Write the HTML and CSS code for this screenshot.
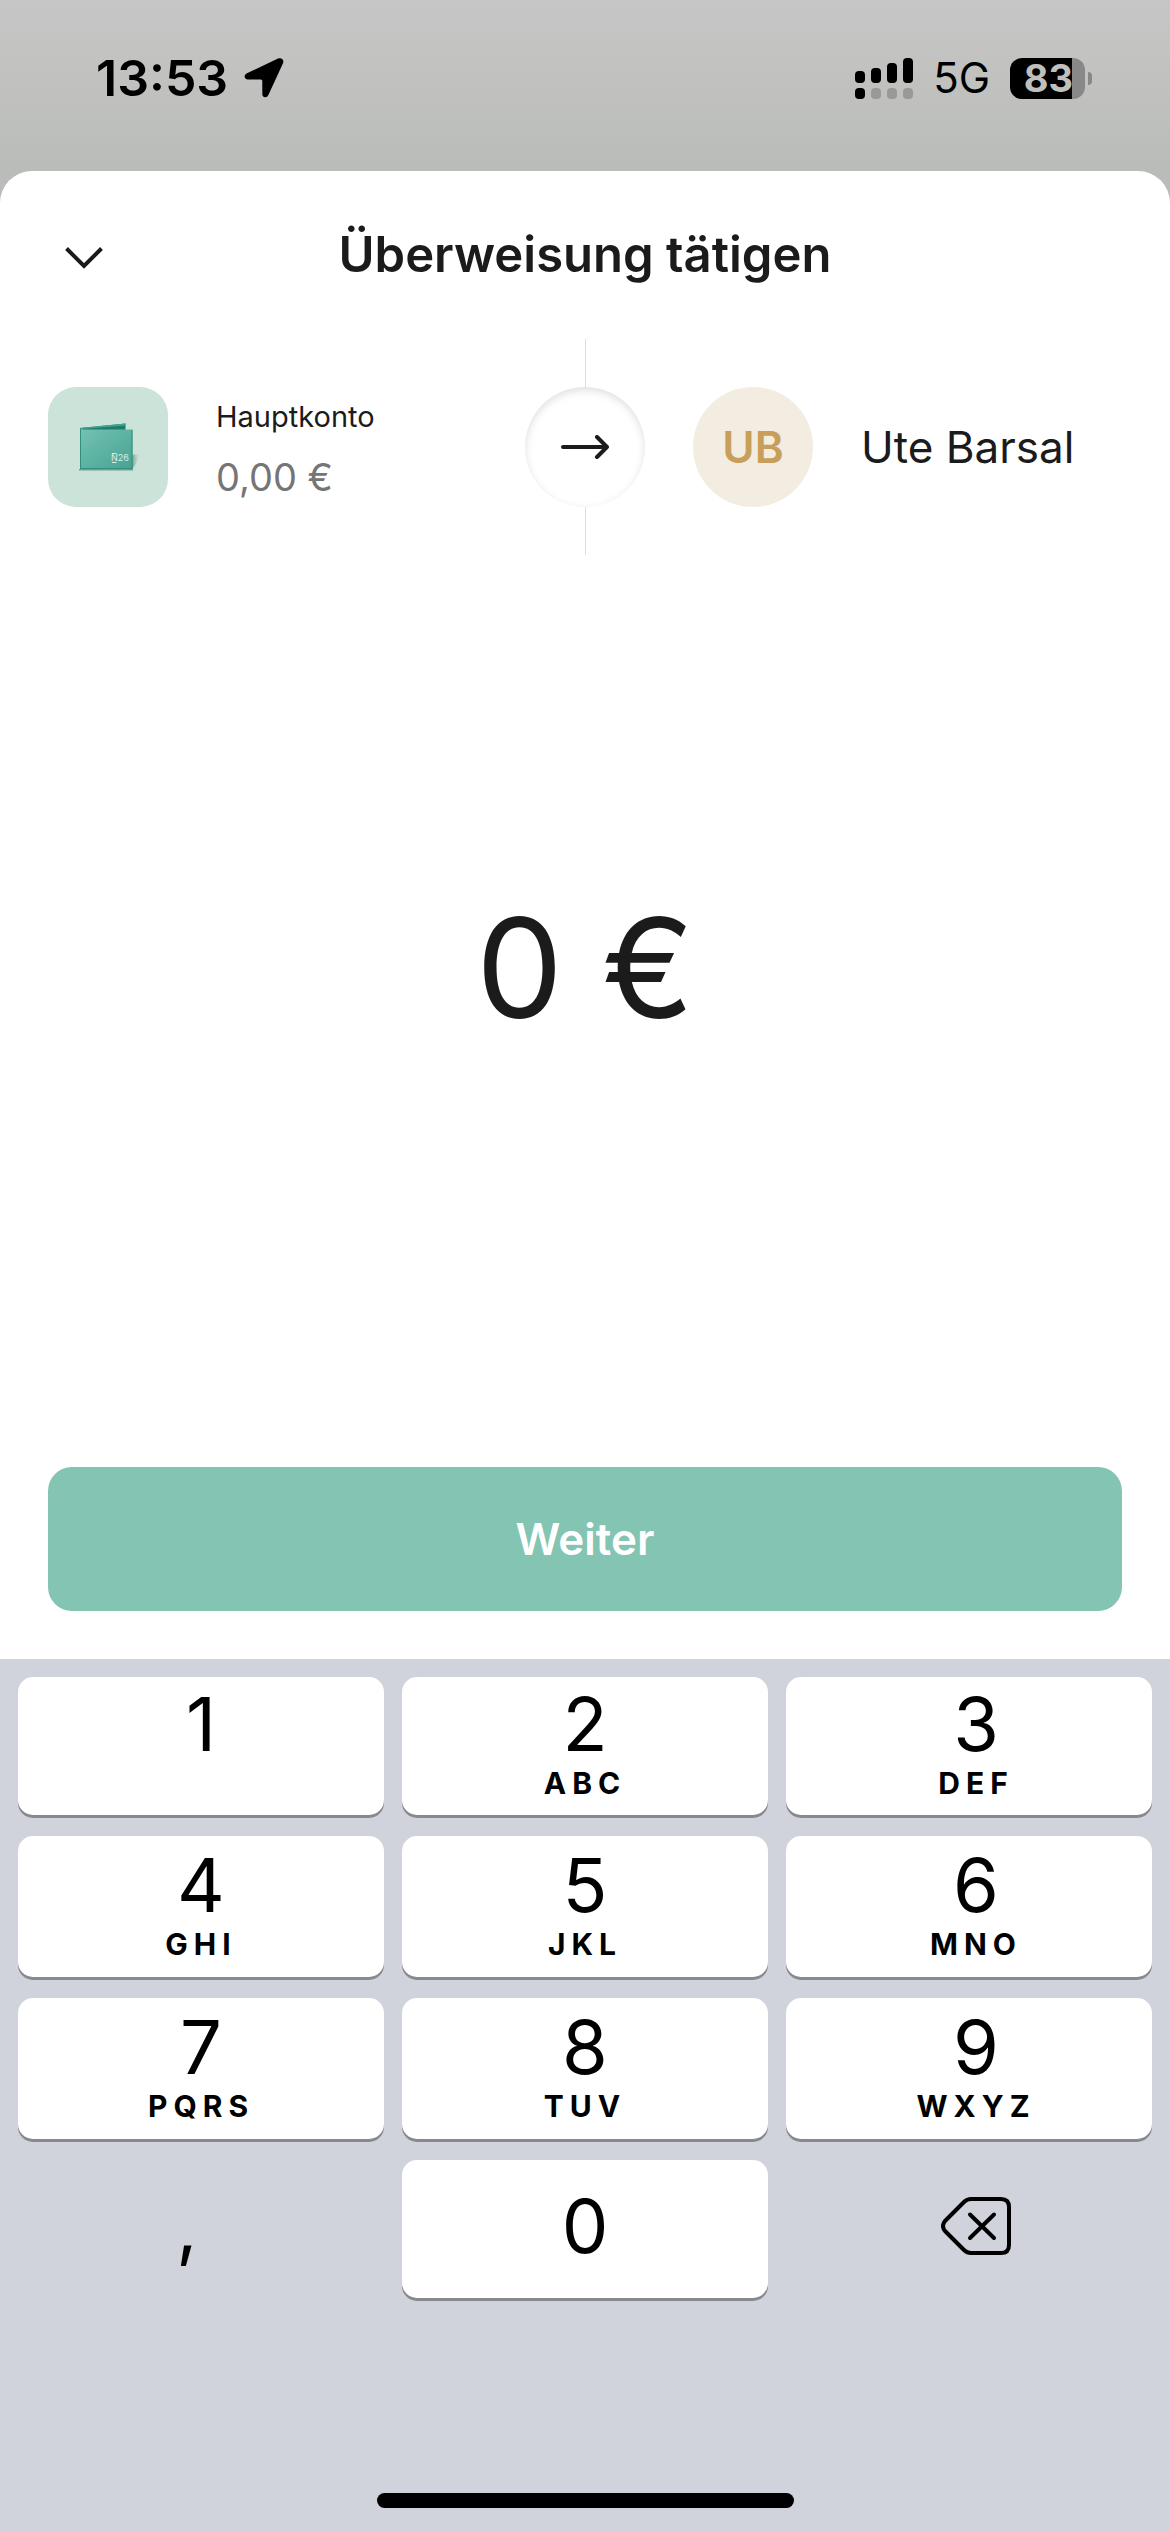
FILE: index.html
```html
<!DOCTYPE html>
<html lang="de">
<head>
<meta charset="utf-8">
<meta name="viewport" content="width=device-width, initial-scale=1">
<title>Überweisung tätigen</title>
<link rel="stylesheet" href="styles.css">
</head>
<body>
<div class="status-bar">
  <div class="status-group">
    <span class="clock">13:53</span>
    <svg class="location" viewBox="0 0 40 40" aria-hidden="true"><path d="M34 .6 3 15.300C-.8 17 .3 21.500 4 21.500H17Q18.300 21.500 18.300 23V36C18.300 40 23 40.500 24.500 36.800L39 5.200C40.400 1.800 37.500-.8 34 .6Z"/></svg>
  </div>
  <div class="status-group status-right">
    <svg class="signal" viewBox="0 0 58 41" aria-hidden="true">
      <rect y="13" width="10" height="12" rx="4"/><rect x="16" y="10" width="10" height="15" rx="4"/><rect x="32" y="5" width="10" height="20" rx="4"/><rect x="48" width="10" height="25" rx="4"/>
      <rect y="30" width="10" height="11" rx="4"/>
      <g fill="#999a98"><rect x="16" y="30" width="10" height="11" rx="4"/><rect x="32" y="30" width="10" height="11" rx="4"/><rect x="48" y="30" width="10" height="11" rx="4"/></g>
    </svg>
    <span class="network">5G</span>
    <div class="battery"><span class="battery-body">83</span><span class="battery-cap"></span></div>
  </div>
</div>

<main class="sheet">
  <header class="sheet-header">
    <button class="close" type="button" aria-label="Schließen">
      <svg viewBox="0 0 40 24" aria-hidden="true"><path d="M2.500 2.500 20 20 37.500 2.500" fill="none" stroke="currentColor" stroke-width="4"/></svg>
    </button>
    <h1 class="title">Überweisung tätigen</h1>
  </header>

  <section class="transfer">
    <div class="party">
      <div class="account-icon">
        <svg viewBox="0 0 120 120" aria-hidden="true">
          <defs>
            <linearGradient id="leather" x1="0" y1="0" x2="1" y2="1"><stop offset="0" stop-color="#74c2b2"/><stop offset="1" stop-color="#47a392"/></linearGradient>
            <linearGradient id="shade" x1="0" y1="0" x2="1" y2="0"><stop offset="0" stop-color="#6f8f84" stop-opacity=".9"/><stop offset="1" stop-color="#9fbab0" stop-opacity="0"/></linearGradient>
          </defs>
          <path d="M84 68 91 67Q90 76 84 82Z" fill="url(#shade)"/>
          <path d="M31 82H85V83.500H31Z" fill="#7b9b90"/>
          <path d="M32 41 77.500 36.500V44H32Z" fill="#1d7c6b"/>
          <path d="M32 41 77.500 36.500V38.500L34 42Z" fill="#43a392"/>
          <path d="M32 41.500 35 42.500H84.500V82H32Z" fill="url(#leather)"/>
          <path d="M32.500 42V82M32 81.500H84.500M84 43V82" stroke="#328d7c" fill="none"/>
          <path d="M64 66.500H68.500M64 75.500H68.500" stroke="#d6eee5" stroke-width="1"/>
          <text class="wallet-label" x="63" y="74">N26</text>
        </svg>
      </div>
      <div class="account">
        <div class="account-name">Hauptkonto</div>
        <div class="account-balance">0,00 €</div>
      </div>
    </div>
    <div class="connector">
      <div class="connector-circle">
        <svg viewBox="0 0 48 24" aria-hidden="true"><path d="M2 12H46M36 2 46 12 36 22" fill="none" stroke="currentColor" stroke-width="4" stroke-linecap="round" stroke-linejoin="round"/></svg>
      </div>
    </div>
    <div class="party">
      <div class="avatar">UB</div>
      <div class="recipient">Ute Barsal</div>
    </div>
  </section>

  <section class="amount">
    <input class="amount-input" type="text" inputmode="decimal" aria-label="Betrag" value="0 €">
  </section>

  <div class="actions"><button class="submit" type="button">Weiter</button></div>
</main>

<div class="keyboard">
  <div class="keys">
    <button class="key" type="button"><span class="digit">1</span><span class="letters"></span></button>
    <button class="key" type="button"><span class="digit">2</span><span class="letters">ABC</span></button>
    <button class="key" type="button"><span class="digit">3</span><span class="letters">DEF</span></button>
    <button class="key" type="button"><span class="digit">4</span><span class="letters">GHI</span></button>
    <button class="key" type="button"><span class="digit">5</span><span class="letters">JKL</span></button>
    <button class="key" type="button"><span class="digit">6</span><span class="letters">MNO</span></button>
    <button class="key" type="button"><span class="digit">7</span><span class="letters">PQRS</span></button>
    <button class="key" type="button"><span class="digit">8</span><span class="letters">TUV</span></button>
    <button class="key" type="button"><span class="digit">9</span><span class="letters">WXYZ</span></button>
    <button class="key key-single key-plain key-comma" type="button"><span class="digit">,</span></button>
    <button class="key key-single" type="button"><span class="digit">0</span></button>
    <button class="key key-single key-plain" type="button" aria-label="Löschen">
      <svg class="delete" viewBox="0 0 70 58" aria-hidden="true"><g fill="none" stroke="currentColor" stroke-width="4" stroke-linecap="round" stroke-linejoin="round"><path d="M30 2H60Q68 2 68 10V48Q68 56 60 56H30Q26 56 23 53L4 34Q0 29 4 24L23 5Q26 2 30 2Z"/><path d="M29 17.500 53 41M53 17.500 29 41"/></g></svg>
    </button>
  </div>
  <div class="home-indicator"></div>
</div>
</body>
</html>
```

FILE: styles.css
```css
* { box-sizing: border-box; }

body {
  margin: 0;
  min-height: 100vh;
  display: flex;
  flex-direction: column;
  font-family: Inter, "Liberation Sans", sans-serif;
  color: #1b1b1b;
  background: linear-gradient(#c6c6c7 0, #c3c4c1 50px, #babcb9 171px, #babcb9 240px);
}

button {
  padding: 0;
  border: 0;
  background: none;
  color: inherit;
  font: inherit;
}

svg { display: block; }

/* Status bar */
.status-bar {
  height: 171px;
  padding: 48px 78px 0 96px;
  display: flex;
  justify-content: space-between;
  align-items: flex-start;
  color: #000;
}
.status-group { display: flex; align-items: center; gap: 16px; height: 60px; }
.status-right { gap: 20px; }
.clock { font-size: 50px; line-height: 60px; font-weight: 600; }
.location { width: 40px; height: 40px; }
.signal { width: 58px; height: 41px; }
.network { font-size: 42px; line-height: 60px; font-weight: 400; }
.battery { display: flex; align-items: center; gap: 3px; }
.battery-body {
  width: 75px;
  height: 41px;
  padding-left: 2px;
  border-radius: 12px;
  background: linear-gradient(90deg, #000 62px, #888 62px);
  color: #bfc0be;
  font-size: 38px;
  line-height: 41px;
  font-weight: 700;
  text-align: center;
}
.battery-cap { width: 4px; height: 13px; border-radius: 0 4px 4px 0; background: #888; }

/* Sheet */
.sheet {
  flex: 1;
  display: flex;
  flex-direction: column;
  border-radius: 32px 32px 0 0;
  background: #fff;
}
.sheet-header {
  height: 168px;
  padding: 0 48px;
  display: grid;
  grid-template-columns: 72px 1fr 72px;
  align-items: center;
}
.close { height: 72px; display: grid; place-items: center start; padding: 6px 0 0 16px; }
.close svg { width: 40px; height: 24px; }
.title { margin: 0; text-align: center; font-size: 49px; line-height: 60px; font-weight: 600; }

.transfer {
  height: 216px;
  padding: 0 48px;
  display: grid;
  grid-template-columns: 1fr 120px 1fr;
  column-gap: 48px;
}
.party { display: flex; align-items: center; gap: 48px; white-space: nowrap; }
.account-icon, .avatar { flex: none; width: 120px; height: 120px; }
.account-icon { border-radius: 28px; background: #cbe3d9; }
.wallet-label { font: 9px Inter, sans-serif; fill: #d6eee5; }
.account-name { font-size: 29px; line-height: 60px; }
.account-balance { font-size: 38px; line-height: 60px; color: #757575; }
.connector { display: flex; flex-direction: column; align-items: center; }
.connector::before, .connector::after { content: ""; flex: 1; width: 1px; background: #dedede; }
.connector-circle {
  width: 120px;
  height: 120px;
  border-radius: 50%;
  display: grid;
  place-items: center;
  box-shadow: inset 0 3px 9px rgba(0, 0, 0, .13);
}
.connector-circle svg { width: 48px; height: 24px; }
.avatar {
  border-radius: 50%;
  background: #f3ece0;
  color: #c89f5a;
  font-size: 44px;
  line-height: 120px;
  font-weight: 600;
  text-align: center;
}
.recipient { font-size: 44px; line-height: 60px; }

.amount { flex: 1; display: flex; align-items: center; padding: 0 48px 86px; }
.amount-input {
  width: 100%;
  padding: 0;
  border: 0;
  outline: 0;
  background: none;
  color: inherit;
  font: 400 138px/168px Inter, "Liberation Sans", sans-serif;
  text-align: center;
}
.actions { padding: 0 48px 48px; }
.submit {
  width: 100%;
  height: 144px;
  border-radius: 24px;
  background: #84c4b3;
  color: #fff;
  font-size: 44px;
  font-weight: 600;
}

/* Keyboard */
.keyboard { padding: 18px 18px 24px; background: #d0d3db; color: #000; }
.keys {
  display: grid;
  grid-template-columns: repeat(3, 1fr);
  grid-template-rows: 138px 141px 141px 138px;
  gap: 21px 18px;
}
.key {
  display: flex;
  flex-direction: column;
  align-items: center;
  justify-content: center;
  gap: 4px;
  border-radius: 15px;
  background: #fff;
  box-shadow: 0 3px 0 #88898d;
}
.key:nth-child(3n) { padding-left: 14px; }
.key-single { padding-bottom: 6px; }
.key-plain { background: none; box-shadow: none; }
.key-comma { padding-right: 28px; }
.digit { font-size: 74px; line-height: 70px; }
.letters { height: 40px; font-size: 30px; line-height: 40px; font-weight: 700; letter-spacing: 6px; }
.delete { width: 70px; height: 58px; }
.home-indicator { width: 417px; height: 15px; margin: 195px auto 0; border-radius: 8px; background: #000; }
```
